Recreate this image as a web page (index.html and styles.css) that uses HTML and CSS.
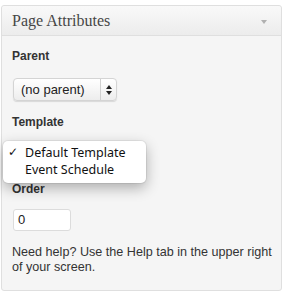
FILE: index.html
```html
<!DOCTYPE html>
<html lang="en">
<head>
    <meta charset="UTF-8">
    <meta name="viewport" content="width=device-width, initial-scale=1.0">
    <title>Page Attributes</title>
    <link rel="stylesheet" href="styles.css">
</head>
<body>

    <div class="postbox">
        <div class="postbox-header">
            <h3>Page Attributes</h3>
            <span class="toggle-arrow"></span>
        </div>

        <div class="inside">
            <p class="label">Parent</p>
            <div class="fake-select">
                <span class="fake-select-text">(no parent)</span>
                <span class="fake-select-arrows"><i class="up"></i><i class="down"></i></span>
            </div>

            <p class="label">Template</p>
            <div class="field">
                <!-- the closed select sits under the open menu -->
                <div class="fake-select fake-select-wide">
                    <span class="fake-select-text"></span>
                    <span class="fake-select-arrows"><i class="up"></i><i class="down"></i></span>
                </div>
                <ul class="select-menu">
                    <li class="checked"><span class="check">&#10003;</span>Default Template</li>
                    <li><span class="check"></span>Event Schedule</li>
                </ul>
            </div>

            <p class="label">Order</p>
            <div class="order-input">0</div>

            <p class="help">Need help? Use the Help tab in the upper right of your screen.</p>
        </div>
    </div>

</body>
</html>
```

FILE: styles.css
```css
body {
    margin: 0;
    background: #fff;
    font-family: 'Liberation Sans', Arial, sans-serif;
    color: #333;
}

.postbox {
    margin: 5px 4px 0 1px;
    border: 1px solid #dfdfdf;
    border-radius: 3px;
    background: #f5f5f5;
}

.postbox-header {
    display: flex;
    justify-content: space-between;
    align-items: center;
    height: 29px;
    padding: 0 14px 0 10px;
    background: linear-gradient(#f9f9f9, #ececec);
    border-bottom: 1px solid #dfdfdf;
    border-radius: 3px 3px 0 0;
}

.postbox-header h3 {
    margin: 0;
    font-family: 'Liberation Serif', 'Times New Roman', serif;
    font-weight: normal;
    font-size: 16px;
    line-height: 29px;
    color: #464646;
}

.toggle-arrow {
    width: 0;
    height: 0;
    border-left: 3px solid transparent;
    border-right: 3px solid transparent;
    border-top: 4px solid #b0b0b0;
    margin-top: 2px;
}

.inside {
    padding: 12px 8px 15px 10px;
}

.label {
    margin: 0 0 14px;
    font-size: 12px;
    font-weight: bold;
    line-height: 16px;
    color: #333;
}

.fake-select {
    display: flex;
    align-items: center;
    width: 102px;
    height: 21px;
    margin: 0 0 13px 1px;
    border: 1px solid #d4d4d4;
    border-radius: 4px;
    background: linear-gradient(#ffffff, #ededed);
    box-shadow: 0 1px 1px rgba(0, 0, 0, 0.12);
    font-size: 13px;
    color: #222;
}

.fake-select-wide {
    width: 130px;
    margin-bottom: 14px;
}

.fake-select-text {
    flex: 1;
    padding-left: 7px;
    white-space: nowrap;
    overflow: hidden;
}

.fake-select-arrows {
    display: flex;
    flex-direction: column;
    align-items: center;
    justify-content: center;
    gap: 2px;
    width: 15px;
    height: 100%;
    border-left: 1px solid #d0d0d0;
}

.fake-select-arrows i {
    width: 0;
    height: 0;
    border-left: 3px solid transparent;
    border-right: 3px solid transparent;
}

.fake-select-arrows .up {
    border-bottom: 4px solid #222;
}

.fake-select-arrows .down {
    border-top: 4px solid #222;
}

.field {
    position: relative;
}

.select-menu {
    position: absolute;
    top: -3px;
    left: -9px;
    width: 143px;
    height: 42px;
    box-sizing: border-box;
    margin: 0;
    padding: 3px 0 0;
    list-style: none;
    background: #fff;
    border-radius: 5px;
    box-shadow: 0 0 0 1px rgba(0, 0, 0, 0.06), 0 5px 14px rgba(0, 0, 0, 0.3);
    font-family: 'Noto Sans', 'DejaVu Sans', sans-serif;
    font-size: 12.5px;
    line-height: 17px;
    color: #111;
}

.select-menu li {
    display: flex;
    white-space: nowrap;
}

.check {
    width: 22px;
    padding-left: 5px;
    box-sizing: border-box;
    font-family: 'DejaVu Sans', sans-serif;
    font-size: 12px;
    font-weight: bold;
}

.order-input {
    width: 52px;
    height: 20px;
    margin: -2px 0 0 1px;
    padding-left: 4px;
    border: 1px solid #dcdcdc;
    border-radius: 3px;
    background: #fff;
    font-size: 13px;
    line-height: 20px;
    color: #222;
}

.help {
    margin: 14px 0 0;
    font-size: 12.6px;
    line-height: 15px;
    color: #333;
}
```
